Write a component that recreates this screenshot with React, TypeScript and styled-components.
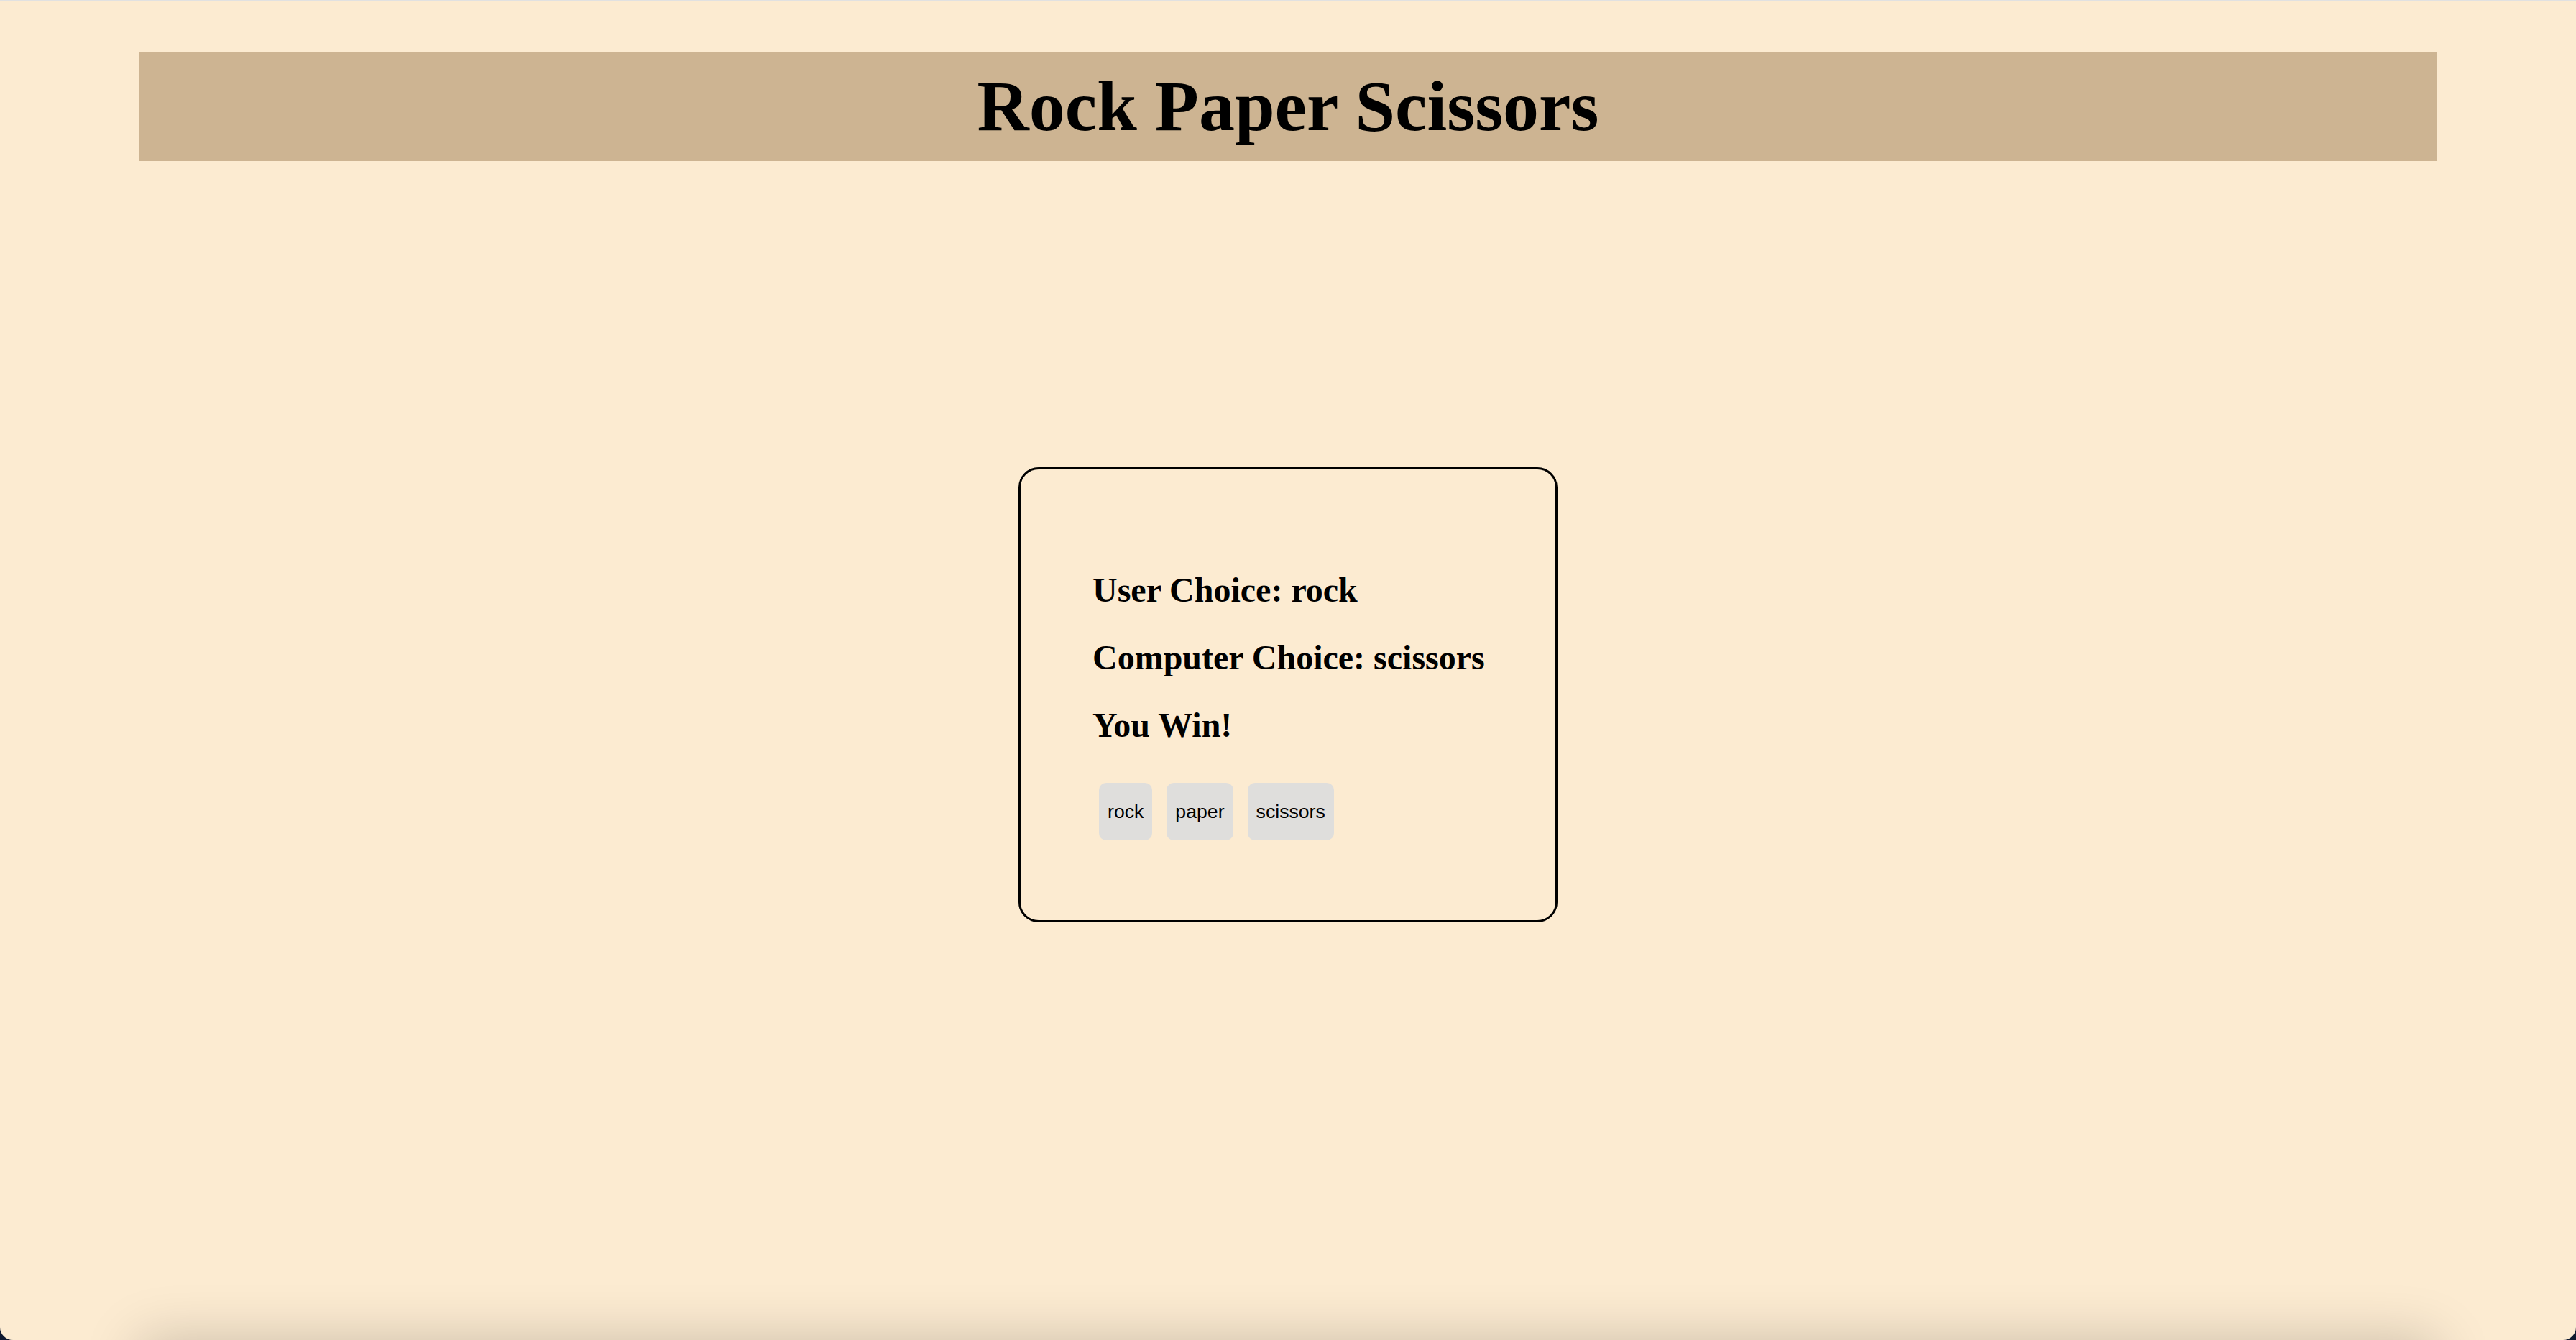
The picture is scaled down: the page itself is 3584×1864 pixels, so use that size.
import React from "react";
import styled, { createGlobalStyle } from "styled-components";

const GlobalStyle = createGlobalStyle`
  html, body {
    margin: 0;
    padding: 0;
    background: #0f1a30;
  }
  #root {
    margin: 0;
  }
`;

const Page = styled.div`
  height: 100vh;
  overflow: hidden;
  background: #fcebd1;
  border-top: 2px solid #e1e1e1;
  box-sizing: border-box;
  border-radius: 0 0 18px 18px;
  display: flex;
  flex-direction: column;
  align-items: center;
`;

const Viewport = styled.div`
  flex: 0 0 auto;
  height: calc(100vh - 2px);
  width: 100%;
  display: flex;
  flex-direction: column;
  align-items: center;
`;

const Header = styled.header`
  margin-top: 71px;
  width: 3196px;
  height: 151px;
  box-sizing: border-box;
  background: #cdb492;
  display: flex;
  align-items: center;
  justify-content: center;
`;

const Title = styled.h1`
  margin: 0;
  font-family: "Liberation Serif", "Times New Roman", serif;
  font-weight: 700;
  font-size: 100px;
  line-height: 111px;
  color: #000;
  padding-bottom: 2px;
`;

const Card = styled.section`
  margin-top: 426px;
  box-sizing: border-box;
  width: 750px;
  border: 3px solid #000;
  border-radius: 28px;
  padding: 101px 0 111px 100px;
  display: flex;
  flex-direction: column;
  align-items: flex-start;
`;

const Line = styled.h2`
  margin: 39px 0 0;
  font-family: "Liberation Serif", "Times New Roman", serif;
  font-weight: 700;
  font-size: 48px;
  line-height: 55px;
  color: #000;
  white-space: nowrap;
`;

const ButtonRow = styled.div`
  display: flex;
  gap: 20px;
  margin: 53px 0 0 9px;
`;

const ChoiceButton = styled.button`
  height: 80px;
  padding: 0 12px;
  border: none;
  border-radius: 10px;
  background: #dfdedc;
  color: #000;
  font-family: "Liberation Sans", Arial, sans-serif;
  font-size: 26.67px;
  line-height: 1;
  cursor: pointer;
`;

const Footer = styled.footer`
  flex: 0 0 120px;
  width: 3196px;
  background: #fcebd1;
  box-shadow: 0 0 80px rgba(0, 0, 0, 0.2);
`;

const choices = ["rock", "paper", "scissors"];

export default function App() {
  return (
    <>
      <GlobalStyle />
      <Page>
        <Viewport>
          <Header>
            <Title>Rock Paper Scissors</Title>
          </Header>
          <Card>
            <Line>User Choice: rock</Line>
            <Line>Computer Choice: scissors</Line>
            <Line>You Win!</Line>
            <ButtonRow>
              {choices.map((c) => (
                <ChoiceButton key={c}>{c}</ChoiceButton>
              ))}
            </ButtonRow>
          </Card>
        </Viewport>
        <Footer />
      </Page>
    </>
  );
}
